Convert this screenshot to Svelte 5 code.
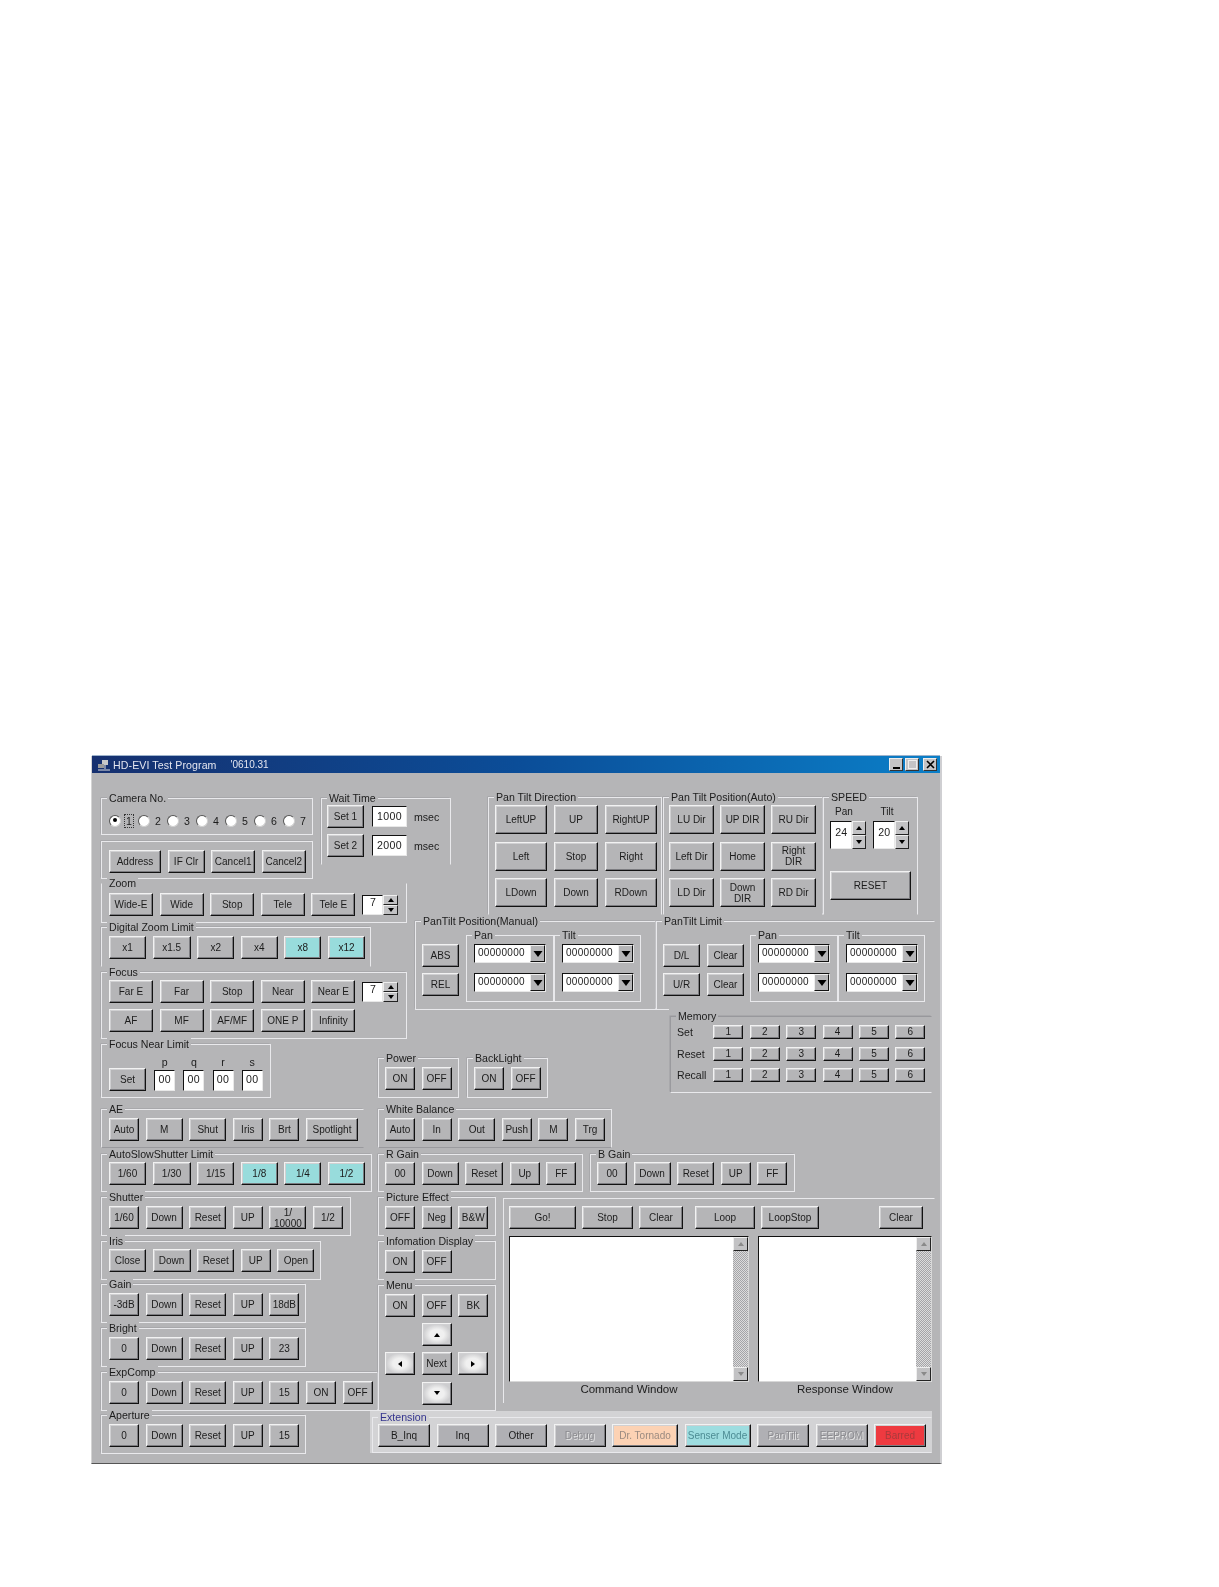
<script>
  const zoomRow = [["Wide-E", 44], ["Wide", 44], ["Stop", 44], ["Tele", 44], ["Tele E", 44]];
  const dzl = [["x1", 37], ["x1.5", 38], ["x2", 37], ["x4", 37], ["x8", 37, "cyan"], ["x12", 37, "cyan"]];
  const focus1 = [["Far E", 44], ["Far", 44], ["Stop", 44], ["Near", 44], ["Near E", 44]];
  const focus2 = [["AF", 44], ["MF", 44], ["AF/MF", 44], ["ONE P", 44], ["Infinity", 44]];
  const ae = [["Auto", 30], ["M", 37], ["Shut", 37], ["Iris", 30], ["Brt", 30], ["Spotlight", 52]];
  const slow = [["1/60", 37], ["1/30", 38], ["1/15", 37], ["1/8", 37, "cyan"], ["1/4", 37, "cyan"], ["1/2", 37, "cyan"]];
  const shutter = [["1/60", 30], ["Down", 37], ["Reset", 37], ["UP", 30], ["1/ 10000", 37, "tall"], ["1/2", 30]];
  const iris = [["Close", 37], ["Down", 38], ["Reset", 37], ["UP", 30], ["Open", 37]];
  const gain = [["-3dB", 30], ["Down", 37], ["Reset", 37], ["UP", 30], ["18dB", 30]];
  const bright = [["0", 30], ["Down", 37], ["Reset", 37], ["UP", 30], ["23", 30]];
  const exp = [...bright.slice(0, 4), ["15", 30], ["ON", 30], ["OFF", 30]];
  const aperture = [...bright.slice(0, 4), ["15", 30]];

  const direction = [["LeftUP", 52], ["UP", 44], ["RightUP", 52], ["Left", 52], ["Stop", 44], ["Right", 52], ["LDown", 52], ["Down", 44], ["RDown", 52]];
  const auto = ["LU Dir", "UP DIR", "RU Dir", "Left Dir", "Home", "Right DIR", "LD Dir", "Down DIR", "RD Dir"];
  const wb = [["Auto", 30], ["In", 30], ["Out", 37], ["Push", 30], ["M", 30], ["Trg", 30]];
  const rGain = [["00", 30], ["Down", 37], ["Reset", 38], ["Up", 30], ["FF", 30]];
  const bGain = [["00", 30], ["Down", 37], ["Reset", 37], ["UP", 30], ["FF", 30]];
  const ext = [
    ["B_Inq", 52], ["Inq", 52], ["Other", 52], ["Debug", 52, "off"], ["Dr. Tornado", 66, "peach"],
    ["Senser Mode", 66, "teal"], ["PanTilt", 52, "off"], ["EEPROM", 52, "off"], ["Barred", 52, "red"],
  ];
  const memory = ["Set", "Reset", "Recall"];
</script>

{#snippet btns(items)}
  {#each items as [t, w, c]}
    <button class="btn w{w} {c || ''}">{t}</button>
  {/each}
{/snippet}

{#snippet tri(dir, fill = "#000")}
  <svg class="tri" viewBox="0 0 8 8" width="8" height="8">
    {#if dir === "up"}<path d="M4 2 L7 6 H1 Z" fill={fill} />
    {:else if dir === "down"}<path d="M1 2 H7 L4 6 Z" fill={fill} />
    {:else if dir === "left"}<path d="M2 4 L6 1 V7 Z" fill={fill} />
    {:else}<path d="M6 4 L2 1 V7 Z" fill={fill} />{/if}
  </svg>
{/snippet}

{#snippet spin(v, cls = "")}
  <div class="spin {cls}">
    <div class="edit">{v}</div>
    <div class="spin-btns">
      <div class="sb">{@render tri("up")}</div>
      <div class="sb">{@render tri("down")}</div>
    </div>
  </div>
{/snippet}

{#snippet combo()}
  <div class="combo">
    <span>00000000</span>
    <div class="sb drop">{@render tri("down")}</div>
  </div>
{/snippet}

{#snippet comboBox(label, cls)}
  <div class="group {cls}">
    <span class="cap">{label}</span>
    {@render combo()}
    {@render combo()}
  </div>
{/snippet}

{#snippet listBox(cls, label)}
  <div class="list-wrap {cls}">
    <div class="list">
      <div class="scroll">
        <div class="sb dis">{@render tri("up", "#8a8a8a")}</div>
        <div class="sb dis">{@render tri("down", "#8a8a8a")}</div>
      </div>
    </div>
    <div class="list-label">{label}</div>
  </div>
{/snippet}

<div class="window">
  <div class="title">
    <svg class="app-icon" viewBox="0 0 14 12" width="14" height="12">
      <rect x="5" y="1" width="6" height="5" fill="#c8c8c8" />
      <rect x="1" y="5" width="6" height="4" fill="#9a9a9a" />
      <path d="M1 11 H13 M8 6 V10" stroke="#e0e0e0" stroke-width="1" />
    </svg>
    <span class="title-text">HD-EVI Test Program</span>
    <span class="title-date">'0610.31</span>
    <div class="caption">
      <div class="cb"><i class="min"></i></div>
      <div class="cb"><i class="max"></i></div>
      <div class="cb close">
        <svg viewBox="0 0 9 9" width="9" height="9"><path d="M1 1 L8 8 M8 1 L1 8" stroke="#000" stroke-width="1.6" /></svg>
      </div>
    </div>
  </div>

  <div class="body">
    <div class="left">
      <div class="top-left">
        <div class="cam-stack">
          <div class="group camera">
            <span class="cap">Camera No.</span>
            {#each [1, 2, 3, 4, 5, 6, 7] as n}
              <div class="radio-item">
                <span class="radio" class:on={n === 1}></span>
                <span class="radio-label" class:focused={n === 1}>{n}</span>
              </div>
            {/each}
          </div>
          <div class="group address g6 row">
            {@render btns([["Address", 52], ["IF Clr", 37], ["Cancel1", 44], ["Cancel2", 44]])}
          </div>
        </div>
        <div class="group wait">
          <span class="cap">Wait Time</span>
          <div class="wait-row"><button class="btn w37">Set 1</button><div class="edit num">1000</div><span class="unit">msec</span></div>
          <div class="wait-row"><button class="btn w37">Set 2</button><div class="edit num">2000</div><span class="unit">msec</span></div>
        </div>
      </div>

      <div class="group zoom g4 row no-top">
        <span class="cap">Zoom</span>
        {@render btns(zoomRow)}
        {@render spin("7")}
      </div>
      <div class="group dzl g4 row no-bottom">
        <span class="cap">Digital Zoom Limit</span>
        {@render btns(dzl)}
      </div>
      <div class="group focus g5">
        <span class="cap">Focus</span>
        <div class="row">{@render btns(focus1)}{@render spin("7")}</div>
        <div class="row r2">{@render btns(focus2)}</div>
      </div>
      <div class="group near g5">
        <span class="cap">Focus Near Limit</span>
        <button class="btn w37">Set</button>
        {#each ["p", "q", "r", "s"] as l}
          <div class="near-cell"><span>{l}</span><div class="edit two">00</div></div>
        {/each}
      </div>

      <div class="group ae g11 row dim-bottom"><span class="cap">AE</span>{@render btns(ae)}</div>
      <div class="group slow g6 row"><span class="cap">AutoSlowShutter Limit</span>{@render btns(slow)}</div>
      <div class="group shutter g5 row"><span class="cap">Shutter</span>{@render btns(shutter)}</div>
      <div class="group iris g5 row"><span class="cap">Iris</span>{@render btns(iris)}</div>
      <div class="group gain g4 row"><span class="cap">Gain</span>{@render btns(gain)}</div>
      <div class="group gain g5 row"><span class="cap">Bright</span>{@render btns(bright)}</div>
      <div class="group expc g5 row"><span class="cap">ExpComp</span>{@render btns(exp)}</div>
      <div class="group gain g4 row"><span class="cap">Aperture</span>{@render btns(aperture)}</div>
    </div>

    <div class="right">
      <div class="r-top">
        <div class="group ptd no-bottom">
          <span class="cap">Pan Tilt Direction</span>
          <div class="pad-grid dir">{@render btns(direction)}</div>
        </div>
        <div class="group pta no-bottom">
          <span class="cap">Pan Tilt Position(Auto)</span>
          <div class="pad-grid au">
            {#each auto as t}<button class="btn w45">{t}</button>{/each}
          </div>
        </div>
        <div class="group speed no-bottom">
          <span class="cap">SPEED</span>
          <div class="speed-cols">
            <div class="speed-col"><span>Pan</span>{@render spin("24", "big")}</div>
            <div class="speed-col"><span>Tilt</span>{@render spin("20", "big")}</div>
          </div>
          <button class="btn reset">RESET</button>
        </div>
      </div>

      <div class="r-mid">
        <div class="group manual">
          <span class="cap">PanTilt Position(Manual)</span>
          <div class="stack"><button class="btn w37">ABS</button><button class="btn w37">REL</button></div>
          {@render comboBox("Pan", "sub pan")}
          {@render comboBox("Tilt", "sub tilt")}
        </div>
        <div class="group limit">
          <span class="cap">PanTilt Limit</span>
          <div class="stack"><button class="btn w37">D/L</button><button class="btn w37">U/R</button></div>
          <div class="stack"><button class="btn w37">Clear</button><button class="btn w37">Clear</button></div>
          {@render comboBox("Pan", "sub pan2")}
          {@render comboBox("Tilt", "sub tilt2")}
        </div>
      </div>

      <div class="r-third">
        <div class="pw">
          <div class="group power row"><span class="cap">Power</span>{@render btns([["ON", 30], ["OFF", 30]])}</div>
          <div class="group power row"><span class="cap">BackLight</span>{@render btns([["ON", 30], ["OFF", 30]])}</div>
        </div>
        <div class="group mem">
          <span class="cap">Memory</span>
          {#each memory as m}
            <div class="mem-row">
              <span class="mem-label">{m}</span>
              {#each [1, 2, 3, 4, 5, 6] as n}<button class="btn mem-btn">{n}</button>{/each}
            </div>
          {/each}
        </div>
      </div>

      <div class="group wb row dim-bottom"><span class="cap">White Balance</span>{@render btns(wb)}</div>
      <div class="gains">
        <div class="group rg row"><span class="cap">R Gain</span>{@render btns(rGain)}</div>
        <div class="group rg row"><span class="cap">B Gain</span>{@render btns(bGain)}</div>
      </div>

      <div class="lower">
        <div class="lower-left">
          <div class="group row"><span class="cap">Picture Effect</span>{@render btns([["OFF", 30], ["Neg", 30], ["B&W", 30]])}</div>
          <div class="group row g5"><span class="cap">Infomation Display</span>{@render btns([["ON", 30], ["OFF", 30]])}</div>
          <div class="group menu g5">
            <span class="cap">Menu</span>
            <div class="menu-grid">
              <button class="btn w30">ON</button><button class="btn w30">OFF</button><button class="btn w30">BK</button>
              <i></i><button class="btn w30 arrow">{@render tri("up")}</button><i></i>
              <button class="btn w30 arrow">{@render tri("left")}</button><button class="btn w30">Next</button><button class="btn w30 arrow">{@render tri("right")}</button>
              <i></i><button class="btn w30 arrow">{@render tri("down")}</button><i></i>
            </div>
          </div>
        </div>
        <div class="panel">
          <div class="panel-row">
            <button class="btn w67">Go!</button><button class="btn w51">Stop</button><button class="btn w44">Clear</button>
            <button class="btn w60 ml">Loop</button><button class="btn w58">LoopStop</button>
            <button class="btn w44 push">Clear</button>
          </div>
          <div class="lists">
            {@render listBox("cmd", "Command Window")}
            {@render listBox("resp", "Response Window")}
          </div>
        </div>
      </div>

      <div class="ext-band">
        <div class="group ext row">
          <span class="cap">Extension</span>
          {@render btns(ext)}
        </div>
      </div>
    </div>
  </div>
</div>

<style>
  :global(body) {
    margin: 0;
    background: #fff;
  }
  .window {
    --face: #b5b5b7;
    position: relative;
    box-sizing: border-box;
    width: 851px;
    height: 708px;
    margin: 756px 0 0 91px;
    background: var(--face);
    border-left: 1px solid #d4d4d4;
    border-right: 2px solid #cfcfd2;
    border-bottom: 1px solid #555;
    font: 10px "Liberation Sans", Arial, sans-serif;
    color: #1c1c1c;
    filter: blur(0.35px);
  }
  .title {
    display: flex;
    align-items: center;
    height: 17px;
    background: linear-gradient(90deg, #16306f 0%, #0b4d98 50%, #0b7fc8 100%);
    box-shadow: 0 -1px 0 #9fb4cc;
    color: #e4e6f0;
    font-size: 10.6px;
  }
  .app-icon {
    margin-left: 5px;
  }
  .title-text {
    margin-left: 2px;
    letter-spacing: 0.1px;
  }
  .title-date {
    margin-left: 14px;
    font-size: 10px;
  }
  .caption {
    display: flex;
    margin-left: auto;
    margin-right: 3px;
    gap: 2px;
  }
  .cb {
    display: flex;
    align-items: center;
    justify-content: center;
    box-sizing: border-box;
    width: 14px;
    height: 13px;
    background: #c4c4c6;
    border: 1px solid;
    border-color: #eee #333 #333 #eee;
  }
  .close {
    margin-left: 2px;
  }
  .min {
    width: 7px;
    height: 2px;
    background: #000;
    margin-top: 6px;
  }
  .max {
    width: 7px;
    height: 7px;
    border: 1px solid #eee;
  }
  .body {
    display: flex;
    padding: 25px 0 0 9px;
  }
  .left {
    display: flex;
    flex-direction: column;
    width: 277px;
    flex: none;
  }
  .right {
    width: 557px;
    flex: none;
    margin-top: -1px;
  }

  .group {
    position: relative;
    box-sizing: border-box;
    height: 39px;
    padding: 8px 7px 0;
    border: 1px solid #e9e9ec;
    box-shadow: -1px -1px 0 -0.5px #9a9a9e;
  }
  .cap {
    position: absolute;
    top: -7px;
    left: 5px;
    padding: 0 2px;
    line-height: 13px;
    font-size: 10.6px;
    background: var(--face);
    white-space: nowrap;
  }
  .row {
    display: flex;
    gap: 6.6px;
  }
  .no-top {
    border-top-color: transparent;
    box-shadow: none;
  }
  .no-bottom {
    border-bottom-color: transparent;
  }
  .dim-bottom {
    border-bottom-color: #9a9a9e;
  }
  .g4 { margin-top: 4px; }
  .g5 { margin-top: 5px; }
  .g6 { margin-top: 6px; }
  .g11 { margin-top: 11px; }

  .btn {
    box-sizing: border-box;
    height: 23px;
    padding: 0 1px;
    background: var(--face);
    border: 1px solid;
    border-color: #f2f2f2 #111 #111 #f2f2f2;
    box-shadow: inset -1px -1px 0 #7c7c80, inset 1px 1px 0 #d0d0d2;
    font: inherit;
    line-height: 11px;
    color: #1c1c1c;
    flex: none;
  }
  .w30 { width: 30px; }
  .w37 { width: 37px; }
  .w38 { width: 38px; }
  .w44 { width: 44px; }
  .w45 { width: 45px; }
  .w51 { width: 51px; }
  .w52 { width: 52px; }
  .w58 { width: 58px; }
  .w60 { width: 60px; }
  .w66 { width: 66px; }
  .w67 { width: 67px; }
  .cyan {
    background: #98dcdc;
  }
  .tall {
    padding: 0;
  }
  .off {
    color: #8c8c90;
    text-shadow: 1px 1px 0 #e6e6e6;
  }
  .peach {
    background: #fcd2b4;
    color: #9a8a80;
  }
  .teal {
    background: #9edde0;
    color: #4d8c94;
  }
  .red {
    background: #ee3a40;
    color: #a83a3c;
  }
  .arrow {
    display: flex;
    align-items: center;
    justify-content: center;
    background: radial-gradient(closest-side, #f0f0f0 50%, #cdcdcf 100%);
  }
  .tri {
    display: block;
  }

  .edit {
    box-sizing: border-box;
    background: #fff;
    border: 1px solid;
    border-color: #111 #e8e8e8 #e8e8e8 #111;
    font-size: 10.6px;
    color: #1c1c1c;
  }
  .sb {
    display: flex;
    align-items: center;
    justify-content: center;
    box-sizing: border-box;
    width: 15px;
    height: 10px;
    background: #c2c2c4;
    border: 1px solid;
    border-color: #eee #222 #222 #eee;
  }

  .top-left {
    display: flex;
    width: 350px;
  }
  .cam-stack {
    width: 212px;
    flex: none;
  }
  .camera {
    display: flex;
    height: 37px;
    padding: 15px 0 0 7px;
  }
  .radio-item {
    display: flex;
    align-items: center;
    width: 29px;
    height: 13px;
    flex: none;
  }
  .radio {
    position: relative;
    box-sizing: border-box;
    width: 12px;
    height: 12px;
    border-radius: 50%;
    background: #fff;
    border: 1.5px solid;
    border-color: #555 #d0d0d0 #d0d0d0 #555;
  }
  .radio.on::after {
    content: "";
    position: absolute;
    left: 2.5px;
    top: 2.5px;
    width: 4px;
    height: 4px;
    border-radius: 50%;
    background: #000;
  }
  .radio-label {
    margin-left: 3px;
    padding: 0 1px;
    font-size: 10.6px;
    border: 1px solid transparent;
  }
  .focused {
    border: 1px dotted #333;
  }
  .address {
    height: 38px;
    padding-top: 8px;
  }
  .wait {
    display: flex;
    flex-direction: column;
    gap: 6px;
    width: 131px;
    height: 67px;
    margin-left: 8px;
    padding: 6px 5px 0;
    border-bottom-color: transparent;
  }
  .wait-row {
    display: flex;
    align-items: center;
  }
  .num {
    width: 35px;
    height: 21px;
    margin-left: 8px;
    text-align: center;
    line-height: 18px;
    letter-spacing: 0.4px;
  }
  .unit {
    margin-left: 7px;
    font-size: 10.6px;
  }

  .spin {
    display: flex;
    margin-left: 0.4px;
  }
  .spin .edit {
    width: 21px;
    height: 20px;
    margin-top: 2px;
    text-align: center;
    line-height: 13px;
  }
  .spin-btns {
    display: flex;
    flex-direction: column;
    margin-top: 2px;
  }
  .spin.big .edit {
    width: 22px;
    height: 28px;
    margin-top: 0;
    line-height: 20px;
  }
  .spin.big .spin-btns {
    margin-top: 0;
  }
  .spin.big .sb {
    width: 14px;
    height: 14px;
  }
  .zoom {
    width: 306px;
    height: 40px;
    padding-top: 9px;
  }
  .dzl {
    width: 270px;
    height: 40px;
  }
  .focus {
    width: 306px;
    height: 67px;
    padding-top: 7px;
  }
  .r2 {
    margin-top: 6px;
  }
  .near {
    display: flex;
    align-items: flex-end;
    width: 170px;
    height: 54px;
    padding: 0 7px 6px;
  }
  .near-cell {
    display: flex;
    flex-direction: column;
    align-items: center;
    width: 21px;
    margin-left: 8.2px;
    font-size: 10.6px;
  }
  .near-cell span {
    line-height: 12px;
    margin-bottom: 2px;
  }
  .two {
    width: 21px;
    height: 21px;
    text-align: center;
    line-height: 17px;
    letter-spacing: 0.4px;
  }
  .ae {
    width: 263px;
    border-right-color: transparent;
  }
  .slow {
    width: 271px;
    height: 38px;
    padding-top: 7px;
  }
  .shutter {
    width: 250px;
  }
  .iris {
    width: 220px;
    padding-top: 7px;
  }
  .gain {
    width: 205px;
  }
  .expc {
    width: 277px;
  }

  .r-top {
    display: flex;
    margin-left: 110px;
  }
  .ptd {
    width: 174px;
    height: 118px;
    padding: 7px 5px 0 6px;
  }
  .pta {
    width: 160px;
    height: 118px;
    margin-left: 1px;
    padding: 7px 0 0 5px;
  }
  .pad-grid {
    display: grid;
    grid-auto-rows: 29px;
    row-gap: 7.5px;
  }
  .pad-grid .btn {
    height: 29px;
  }
  .dir {
    grid-template-columns: 52px 44px 52px;
    column-gap: 7px;
  }
  .au {
    grid-template-columns: 45px 45px 45px;
    column-gap: 6px;
  }
  .speed {
    width: 95px;
    height: 118px;
    padding: 8px 0 0 6px;
  }
  .speed-cols {
    display: flex;
    gap: 7px;
  }
  .speed-col {
    display: flex;
    flex-direction: column;
    align-items: center;
    width: 36px;
    font-size: 10px;
  }
  .speed-col span {
    line-height: 12px;
    margin-bottom: 3px;
    padding-right: 8px;
  }
  .reset {
    display: block;
    width: 81px;
    height: 29px;
    margin-top: 22px;
  }

  .r-mid {
    display: flex;
    margin: 6px 0 0 37px;
  }
  .manual,
  .limit {
    display: flex;
    align-items: flex-start;
    height: 89px;
    padding: 22px 0 0 6px;
  }
  .manual {
    width: 241px;
  }
  .limit {
    width: 279px;
    border-right-color: transparent;
    border-bottom-color: transparent;
  }
  .limit::after {
    content: "";
    position: absolute;
    left: -1px;
    bottom: -1px;
    width: 13px;
    height: 1px;
    background: #e9e9ec;
  }
  .stack {
    display: flex;
    flex-direction: column;
    gap: 6px;
    flex: none;
  }
  .sub {
    position: absolute;
    display: flex;
    flex-direction: column;
    gap: 10px;
    top: 13px;
    height: 67px;
    padding: 8px 0 0 7px;
    box-shadow: none;
  }
  .pan { left: 50px; width: 88px; }
  .tilt { left: 138px; width: 87px; }
  .pan2 { left: 93px; width: 88px; }
  .tilt2 { left: 181px; width: 87px; }
  .limit .stack + .stack {
    margin-left: 7px;
  }
  .combo {
    display: flex;
    align-items: stretch;
    justify-content: space-between;
    box-sizing: border-box;
    width: 72px;
    height: 19px;
    background: #fff;
    border: 1px solid;
    border-color: #111 #e8e8e8 #e8e8e8 #111;
    font-size: 10px;
    line-height: 15px;
    letter-spacing: 0.3px;
  }
  .combo span {
    padding-left: 3px;
  }
  .drop {
    height: 17px;
    width: 15px;
    background: #b5b5b7;
    border-right-color: #111;
    border-bottom-color: #111;
  }
  .drop :global(svg) {
    width: 12px;
    height: 12px;
  }

  .r-third {
    display: flex;
    align-items: flex-start;
    margin-top: 6px;
  }
  .pw {
    display: flex;
    gap: 8px;
    margin-top: 42px;
  }
  .power {
    width: 81px;
    height: 40px;
    padding-left: 6px;
  }
  .mem {
    width: 262px;
    height: 77px;
    margin-left: 122px;
    padding: 8px 0 0 6px;
    border-left-color: #9a9a9e;
    border-top-color: #98989c;
    border-right-color: transparent;
    border-bottom-color: #e9e9ec;
  }
  .mem-row {
    display: flex;
    align-items: center;
    gap: 6.4px;
    height: 14px;
    margin-bottom: 7.5px;
  }
  .mem-label {
    width: 30px;
    font-size: 10.6px;
  }
  .mem-btn {
    width: 30px;
    height: 14px;
    line-height: 10px;
  }

  .wb {
    width: 234px;
    margin-top: 11px;
    padding-left: 6px;
  }
  .gains {
    display: flex;
    gap: 7px;
    margin-top: 6px;
  }
  .rg {
    width: 205px;
    height: 38px;
    padding: 7px 0 0 6px;
  }
  .lower {
    display: flex;
    gap: 7px;
    margin-top: 5px;
  }
  .lower-left {
    width: 118px;
    flex: none;
  }
  .lower-left .row {
    padding-left: 6px;
  }
  .lower-left .group:not(.menu) {
    width: 118px;
  }
  .menu {
    height: 126px;
    padding-left: 6px;
  }
  .menu-grid {
    display: grid;
    grid-template-columns: 30px 30px 30px;
    grid-auto-rows: 23px;
    column-gap: 6.6px;
    row-gap: 6.2px;
  }
  .panel {
    box-sizing: border-box;
    width: 437px;
    height: 205px;
    margin-top: 1px;
    padding: 7px 0 0 5px;
    border: 1px solid #e9e9ec;
    border-bottom: 0;
    border-right-color: transparent;
  }
  .panel-row {
    display: flex;
    gap: 6px;
    width: 414px;
  }
  .ml {
    margin-left: 6px;
  }
  .push {
    margin-left: auto;
  }
  .lists {
    display: flex;
    gap: 9px;
    margin: 7px 0 0 0;
  }
  .list-wrap {
    flex: none;
  }
  .cmd { width: 240px; }
  .resp { width: 174px; }
  .list {
    display: flex;
    justify-content: flex-end;
    box-sizing: border-box;
    height: 146px;
    background: #fff;
    border: 1px solid;
    border-color: #111 #d8d8d8 #d8d8d8 #111;
  }
  .scroll {
    display: flex;
    flex-direction: column;
    justify-content: space-between;
    width: 15px;
    background: repeating-conic-gradient(#dcdcdc 0 25%, #a4a4a8 0 50%) 0 0 / 2px 2px;
  }
  .dis {
    height: 14px;
  }
  .list-label {
    margin-top: 1px;
    line-height: 13px;
    font-size: 11.5px;
    text-align: center;
  }
  .ext-band {
    box-sizing: border-box;
    width: 562px;
    height: 42px;
    margin: 0 0 0 -8px;
    padding: 6px 0 0 2px;
    background: #d3d3d5;
    --face: #d3d3d5;
  }
  .ext {
    width: 560px;
    height: 36px;
    padding: 6px 0 0 5px;
    border-right-color: transparent;
    box-shadow: none;
  }
  .ext .cap {
    color: #34348e;
    left: 5px;
  }
  .ext .btn {
    background: #b0b0b4;
    margin-right: -0.1px;
  }
  .ext .peach { background: #fcd2b4; }
  .ext .teal { background: #9edde0; }
  .ext .red { background: #ee3a40; }
</style>
